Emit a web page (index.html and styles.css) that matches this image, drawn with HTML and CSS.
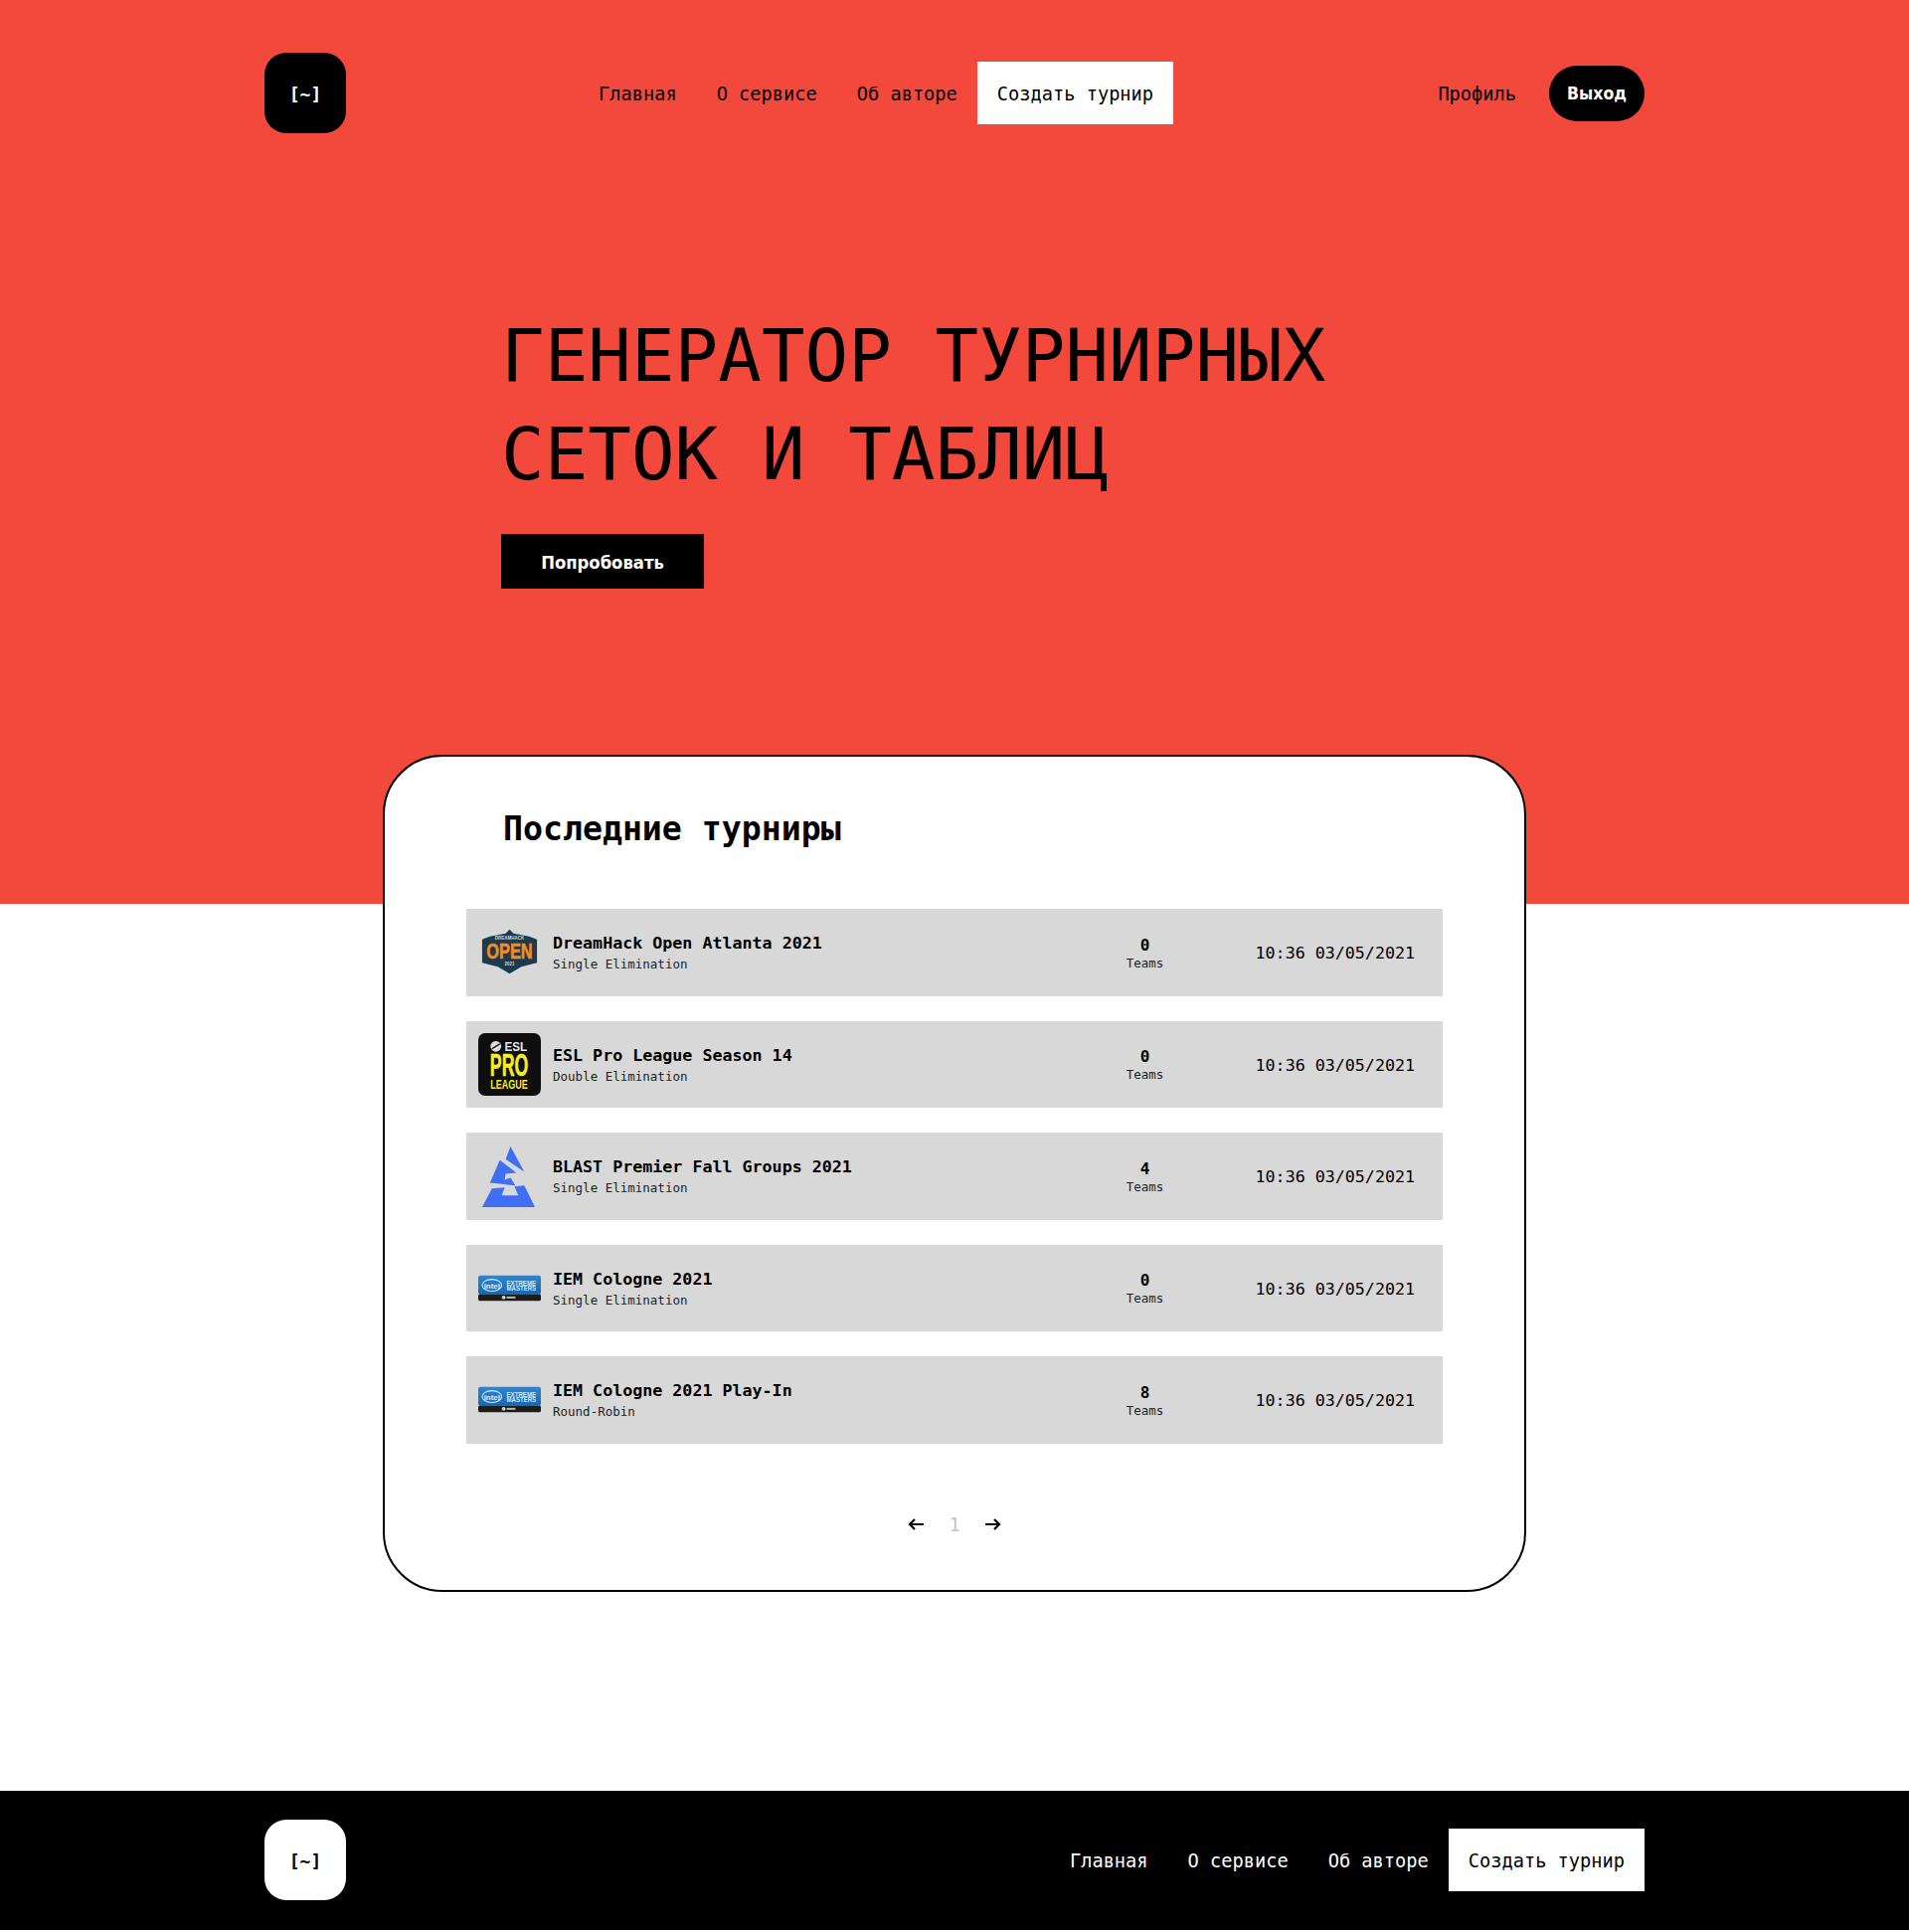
FILE: index.html
```html
<!DOCTYPE html>
<html lang="ru">
<head>
<meta charset="utf-8">
<title>Генератор турнирных сеток и таблиц</title>
<link rel="stylesheet" href="styles.css">
</head>
<body>
<div class="top">
  <header class="bar">
    <div class="logo logo-dark">[~]</div>
    <nav class="nav nav-main">
      <a class="nav-link">Главная</a>
      <a class="nav-link">О сервисе</a>
      <a class="nav-link">Об авторе</a>
      <a class="nav-link nav-cta">Создать турнир</a>
    </nav>
    <div class="account">
      <a class="profile">Профиль</a>
      <a class="logout">Выход</a>
    </div>
  </header>
  <section class="hero">
    <h1 class="hero-title">ГЕНЕРАТОР ТУРНИРНЫХ<br>СЕТОК И ТАБЛИЦ</h1>
    <a class="hero-btn">Попробовать</a>
  </section>
</div>
<main class="card">
  <h2 class="card-title">Последние турниры</h2>
  <div class="rows">
    <article class="row">
      <svg class="row-logo" viewBox="0 0 64 64">
        <path d="M32 9 L36 13 L52 16 L60 19 L60 43 L44 47 L32 54 L20 47 L4 43 L4 19 L12 16 L28 13 Z" fill="#1d3b4c"/>
        <text class="l-open" x="32" y="38.500" textLength="47" lengthAdjust="spacingAndGlyphs">OPEN</text>
        <text class="l-small" x="32" y="19.500" textLength="30" lengthAdjust="spacingAndGlyphs">DREAMHACK</text>
        <text class="l-small" x="32" y="46">2021</text>
      </svg>
      <div class="info"><div class="name">DreamHack Open Atlanta 2021</div><div class="kind">Single Elimination</div></div>
      <div class="teams"><div class="count">0</div><div class="label">Teams</div></div>
      <div class="date">10:36 03/05/2021</div>
    </article>
    <article class="row">
      <svg class="row-logo" viewBox="0 0 64 64">
        <rect width="64" height="64" rx="7" fill="#0e0e0e"/>
        <circle cx="18" cy="13.500" r="5.500" fill="#ddd"/>
        <path d="M14 16 L22 11" stroke="#0e0e0e" stroke-width="1.4"/>
        <text class="l-esl" x="38.500" y="18" textLength="23" lengthAdjust="spacingAndGlyphs">ESL</text>
        <text class="l-pro" x="31.500" y="44" textLength="39" lengthAdjust="spacingAndGlyphs">PRO</text>
        <text class="l-league" x="31.500" y="57" textLength="38" lengthAdjust="spacingAndGlyphs">LEAGUE</text>
      </svg>
      <div class="info"><div class="name">ESL Pro League Season 14</div><div class="kind">Double Elimination</div></div>
      <div class="teams"><div class="count">0</div><div class="label">Teams</div></div>
      <div class="date">10:36 03/05/2021</div>
    </article>
    <article class="row">
      <svg class="row-logo" viewBox="0 0 64 64">
        <path class="blast" d="M33 2 L47 28 L28 15 Z M22 16 L39 29 L28 30 L27 36 L33 34 L38 42 L12 39 Z M14 45 L27 44 L24 52 L41 52 L37 43 L47 42 L58 64 L4 64 Z"/>
      </svg>
      <div class="info"><div class="name">BLAST Premier Fall Groups 2021</div><div class="kind">Single Elimination</div></div>
      <div class="teams"><div class="count">4</div><div class="label">Teams</div></div>
      <div class="date">10:36 03/05/2021</div>
    </article>
    <article class="row">
      <svg class="row-logo" viewBox="0 0 64 64">
        <use href="#iem"/>
      </svg>
      <div class="info"><div class="name">IEM Cologne 2021</div><div class="kind">Single Elimination</div></div>
      <div class="teams"><div class="count">0</div><div class="label">Teams</div></div>
      <div class="date">10:36 03/05/2021</div>
    </article>
    <article class="row">
      <svg class="row-logo" viewBox="0 0 64 64">
        <use href="#iem"/>
      </svg>
      <div class="info"><div class="name">IEM Cologne 2021 Play-In</div><div class="kind">Round-Robin</div></div>
      <div class="teams"><div class="count">8</div><div class="label">Teams</div></div>
      <div class="date">10:36 03/05/2021</div>
    </article>
  </div>
  <div class="pager">
    <svg class="arrow" viewBox="0 0 16 12"><path d="M16 6 H2 M7 1 L2 6 L7 11" fill="none" stroke="#000" stroke-width="2.200"/></svg>
    <span class="page">1</span>
    <svg class="arrow" viewBox="0 0 16 12"><path d="M0 6 H14 M9 1 L14 6 L9 11" fill="none" stroke="#000" stroke-width="2.200"/></svg>
  </div>
</main>
<footer class="footer">
  <div class="bar bar-foot">
    <div class="logo logo-light">[~]</div>
    <nav class="nav">
      <a class="nav-link nav-link-light">Главная</a>
      <a class="nav-link nav-link-light">О сервисе</a>
      <a class="nav-link nav-link-light">Об авторе</a>
      <a class="nav-link nav-cta">Создать турнир</a>
    </nav>
  </div>
</footer>
<svg class="defs" width="0" height="0">
  <defs>
    <linearGradient id="iem-blue" x1="0" y1="0" x2="0" y2="1">
      <stop offset="0" stop-color="#2a86d8"/>
      <stop offset="1" stop-color="#1569b4"/>
    </linearGradient>
    <g id="iem">
      <rect x="0" y="19" width="64" height="19" rx="2" fill="url(#iem-blue)"/>
      <rect x="0" y="38" width="64" height="7" rx="1.500" fill="#1c1c1a"/>
      <ellipse cx="14" cy="29" rx="10" ry="6" fill="none" stroke="#d8eefc" stroke-width="1.100"/>
      <text class="l-intel" x="14" y="32">intel</text>
      <text class="l-iem" x="44" y="29" textLength="30" lengthAdjust="spacingAndGlyphs">EXTREME</text>
      <text class="l-iem" x="44" y="35" textLength="30" lengthAdjust="spacingAndGlyphs">MASTERS</text>
      <circle cx="26" cy="41.500" r="2" fill="#ccc"/>
      <rect x="29" y="40.500" width="9" height="2" fill="#bbb"/>
    </g>
  </defs>
</svg>
</body>
</html>
```
FILE: styles.css
```css
* { box-sizing: border-box; }
html, body { margin: 0; padding: 0; }
body { font-family: "DejaVu Sans Mono", monospace; color: #000; background: #fff; }
.defs { display: block; }
.top { background: #f3493c; height: 909px; padding-top: 53px; }
.bar { width: 1388px; margin: 0 auto; display: flex; align-items: center; }
.logo { width: 82px; height: 81px; border-radius: 22px; display: flex; align-items: center; justify-content: center; padding-top: 2px; font-size: 18px; font-weight: 700; }
.logo-dark { background: #000; color: #fff; }
.logo-light { background: #fff; color: #000; }
.nav { display: flex; align-items: center; }
.nav-main { margin-left: 234px; }
.nav-link { display: block; padding: 22px 20px 20px; font-size: 18.670px; line-height: 21px; color: #000; }
.nav-link-light { color: #fff; }
.nav-cta { background: #fff; color: #000; }
.account { margin-left: auto; display: flex; align-items: center; gap: 33px; }
.profile { font-size: 18.670px; padding-top: 1px; }
.logout { background: #000; color: #fff; width: 96px; height: 56px; border-radius: 28px; display: flex; align-items: center; justify-content: center; padding-top: 1px; font-size: 17.500px; font-weight: 700; font-family: "DejaVu Sans", sans-serif; font-stretch: condensed; }
.hero { margin: 0 0 0 504px; padding-top: 175px; }
.hero-title { margin: 0; font-size: 72.500px; line-height: 99px; font-weight: 400; }
.hero-btn { display: flex; align-items: center; justify-content: center; width: 204px; height: 55px; margin-top: 30px; padding-top: 1px; background: #000; color: #fff; font-family: "DejaVu Sans", sans-serif; font-stretch: condensed; font-weight: 700; font-size: 18.300px; }
.card { width: 1150px; height: 842px; margin: -150px auto 0; background: #fff; border: 2px solid #000; border-radius: 60px; padding: 0 82px; position: relative; }
.card-title { margin: 0; padding: 52px 0 0 37px; font-size: 33.200px; line-height: 42px; font-weight: 700; }
.rows { margin-top: 59px; display: flex; flex-direction: column; gap: 25px; }
.row { height: 87.500px; background: #d8d8d8; display: flex; align-items: center; padding: 0 28px 0 12px; }
.row-logo { width: 63px; height: 63px; flex: none; overflow: visible; }
.info { margin-left: 12px; flex: 1; padding-top: 1px; }
.name { font-size: 16.670px; font-weight: 700; line-height: 20px; }
.kind { font-size: 12.500px; line-height: 15px; margin-top: 3px; color: #222; }
.teams { width: 100px; text-align: center; padding-top: 1px; }
.count { font-size: 16px; font-weight: 700; line-height: 20px; }
.label { font-size: 12.500px; line-height: 15px; color: #222; }
.date { margin-left: 61px; padding-top: 2px; font-size: 16.670px; font-weight: 400; }
.pager { margin-top: 71px; display: flex; align-items: center; justify-content: center; gap: 25px; }
.arrow { width: 16px; height: 12px; }
.page { font-size: 18.670px; color: #c4c4c4; }
.footer { background: #000; margin-top: 200px; height: 140px; padding-top: 29px; }
.bar-foot { justify-content: space-between; }
.blast { fill: #3f6ff5; }
.l-open { font: 700 22px "Liberation Sans", sans-serif; fill: #f98a20; stroke: #f98a20; stroke-width: 0.6px; text-anchor: middle; }
.l-small { font: 700 4.500px "Liberation Sans", sans-serif; fill: #cfd8dc; text-anchor: middle; }
.l-esl { font: 700 12.500px "Liberation Sans", sans-serif; fill: #e8e8e8; text-anchor: middle; }
.l-pro { font: 700 32px "Liberation Sans", sans-serif; fill: #f5f01e; stroke: #f5f01e; stroke-width: 0.6px; text-anchor: middle; }
.l-league { font: 700 13.500px "Liberation Sans", sans-serif; fill: #f5f01e; text-anchor: middle; }
.l-intel { font: 700 8px "Liberation Sans", sans-serif; fill: #e6f3fc; text-anchor: middle; }
.l-iem { font: 700 6.500px "Liberation Sans", sans-serif; fill: #cfe6fa; text-anchor: middle; }
```
